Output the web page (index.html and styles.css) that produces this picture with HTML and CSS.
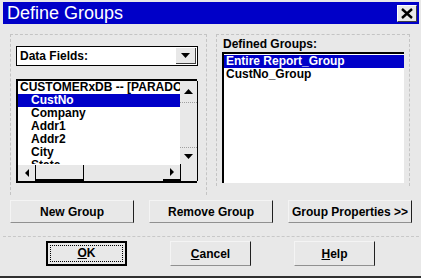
FILE: index.html
```html
<!DOCTYPE html>
<html lang="en">

<head>
    <meta charset="UTF-8">
    <title>Define Groups</title>
    <link rel="stylesheet" href="styles.css">
</head>

<body>
    <div class="window">
        <header class="titlebar">
            <span class="title">Define Groups</span>
            <button class="close">
                <svg width="12" height="11" viewBox="0 0 12 11"><path d="M1 1 L11 10 M11 1 L1 10" stroke="#000" stroke-width="2.4"/></svg>
            </button>
        </header>

        <main class="groups">
            <section class="box box-left">
                <div class="combo">
                    <span class="combo-text">Data Fields:</span>
                    <span class="combo-btn">
                        <svg width="9" height="6" viewBox="0 0 9 6"><path d="M0 0 H9 L4.5 5 Z" fill="#000"/></svg>
                    </span>
                </div>
                <div class="listbox fields">
                    <div class="list-area">
                        <div class="row head">CUSTOMERxDB -- [PARADOX]</div>
                        <div class="row item sel">CustNo</div>
                        <div class="row item">Company</div>
                        <div class="row item">Addr1</div>
                        <div class="row item">Addr2</div>
                        <div class="row item">City</div>
                        <div class="row item">State</div>
                    </div>
                    <div class="vscroll">
                        <span class="sb-btn up"><svg width="9" height="5" viewBox="0 0 9 5"><path d="M0 5 H9 L4.5 0 Z" fill="#000"/></svg></span>
                        <span class="sb-track"></span>
                        <span class="sb-btn down"><svg width="9" height="5" viewBox="0 0 9 5"><path d="M0 0 H9 L4.5 5 Z" fill="#000"/></svg></span>
                    </div>
                    <div class="hscroll">
                        <span class="sb-btn left"><svg width="4" height="8" viewBox="0 0 4 8"><path d="M4 0 V8 L0 4 Z" fill="#000"/></svg></span>
                        <span class="sb-thumb"></span>
                        <span class="sb-track"></span>
                        <span class="sb-btn right"><svg width="4" height="8" viewBox="0 0 4 8"><path d="M0 0 V8 L4 4 Z" fill="#000"/></svg></span>
                    </div>
                    <div class="corner"></div>
                </div>
            </section>

            <section class="box box-right">
                <div class="label">Defined Groups:</div>
                <div class="listbox groups-list">
                    <div class="row grp sel">Entire Report_Group</div>
                    <div class="row grp">CustNo_Group</div>
                </div>
            </section>
        </main>

        <div class="actions">
            <button class="btn wide">New Group</button>
            <button class="btn wide">Remove Group</button>
            <button class="btn wide">Group Properties &gt;&gt;</button>
        </div>

        <div class="separator"></div>

        <div class="dialog-buttons">
            <button class="btn small default"><span class="focus"><u>O</u>K</span></button>
            <button class="btn small"><u>C</u>ancel</button>
            <button class="btn small"><u>H</u>elp</button>
        </div>
    </div>
</body>

</html>
```

FILE: styles.css
```css
* {
    box-sizing: border-box;
}

body {
    margin: 0;
    background-color: #e8e8e8;
    font-family: "Liberation Sans", Arial, sans-serif;
    font-size: 12px;
    font-weight: bold;
    color: #000;
}

.window {
    width: 421px;
    height: 278px;
    padding-top: 2px;
    border-bottom: 2px solid #303030;
}

.titlebar {
    margin-left: 3px;
    width: 416px;
    height: 22px;
    background-color: #0000c8;
    display: flex;
    align-items: center;
    justify-content: space-between;
}

.title {
    color: #fff;
    font-size: 18px;
    font-weight: normal;
    padding-left: 4px;
    line-height: 22px;
}

.close {
    width: 20px;
    height: 17px;
    margin-right: 2px;
    padding: 0;
    background-color: #e8e8e8;
    border: 1px solid;
    border-color: #fff #404040 #404040 #fff;
    display: flex;
    align-items: center;
    justify-content: center;
}

.groups {
    display: flex;
    gap: 9px;
    margin-top: 10px;
    padding-left: 10px;
}

.box {
    border: 1px dashed #c4c4c4;
    border-bottom: none;
}

.box-left {
    width: 197px;
    height: 161px;
    padding: 11px 0 0 5px;
}

.box-right {
    width: 194px;
    height: 152px;
    padding: 3px 0 0 5px;
}

.combo {
    width: 182px;
    height: 20px;
    border: 1px solid #000;
    background-color: #fff;
    display: flex;
    align-items: center;
    justify-content: space-between;
}

.combo-text {
    padding-left: 3px;
}

.combo-btn {
    width: 20px;
    height: 16px;
    margin-right: 1px;
    background-color: #e8e8e8;
    border-right: 1px solid #404040;
    border-bottom: 1px solid #404040;
    display: flex;
    align-items: center;
    justify-content: center;
}

.listbox {
    background-color: #fff;
    border: 1px solid #000;
    border-width: 2px 1px 2px 2px;
}

.fields {
    margin-top: 13px;
    width: 181px;
    height: 104px;
    display: grid;
    grid-template-columns: 162px 18px;
    grid-template-rows: 83px 17px;
}

.list-area {
    overflow: hidden;
}

.row {
    height: 13px;
    line-height: 13px;
    white-space: nowrap;
}

.head {
    padding-left: 2px;
}

.item {
    padding-left: 13px;
}

.sel {
    background-color: #0000c8;
    color: #fff;
}

.vscroll {
    display: flex;
    flex-direction: column;
    background-color: #e8e8e8;
    border-right: 1px solid #000;
}

.hscroll {
    display: flex;
    background-color: #e8e8e8;
    border-top: 1px solid #fff;
}

.sb-btn {
    display: flex;
    align-items: center;
    justify-content: center;
}

.up {
    height: 22px;
    border-bottom: 1px dotted #a0a0a0;
}

.down {
    height: 17px;
    border-top: 1px dotted #a0a0a0;
}

.sb-track {
    flex: 1;
}

.left {
    width: 18px;
    border-right: 1px solid #000;
}

.right {
    width: 17px;
    border-bottom: 2px solid #000;
}

.sb-thumb {
    width: 48px;
    border-right: 1px solid #000;
    border-bottom: 2px solid #000;
}

.corner {
    background-color: #e8e8e8;
    border-left: 1px solid #000;
    border-right: 1px solid #000;
}

.label {
    height: 13px;
    line-height: 13px;
    padding-left: 1px;
}

.groups-list {
    margin-top: 1px;
    width: 182px;
    height: 131px;
    padding-top: 1px;
    border-width: 2px 0 0 2px;
}

.grp {
    padding-left: 2px;
}

.actions {
    display: flex;
    gap: 15px;
    padding-left: 10px;
    margin-top: 5px;
}

.btn {
    font: inherit;
    color: #000;
    background-color: #e8e8e8;
    border: 1px solid;
    border-color: #f4f4f4 #202020 #909090 #f4f4f4;
    padding: 0;
}

.wide {
    width: 124px;
    height: 23px;
}

.separator {
    margin: 13px 0 0 3px;
    width: 416px;
    border-top: 1px dashed #c8c8c8;
}

.dialog-buttons {
    display: flex;
    gap: 43px;
    padding-left: 46px;
    margin-top: 4px;
}

.small {
    width: 81px;
    height: 25px;
}

.default {
    border: 2px solid #000;
    padding: 2px;
}

.focus {
    display: block;
    height: 100%;
    border: 1px dotted #000;
    line-height: 15px;
}
```
